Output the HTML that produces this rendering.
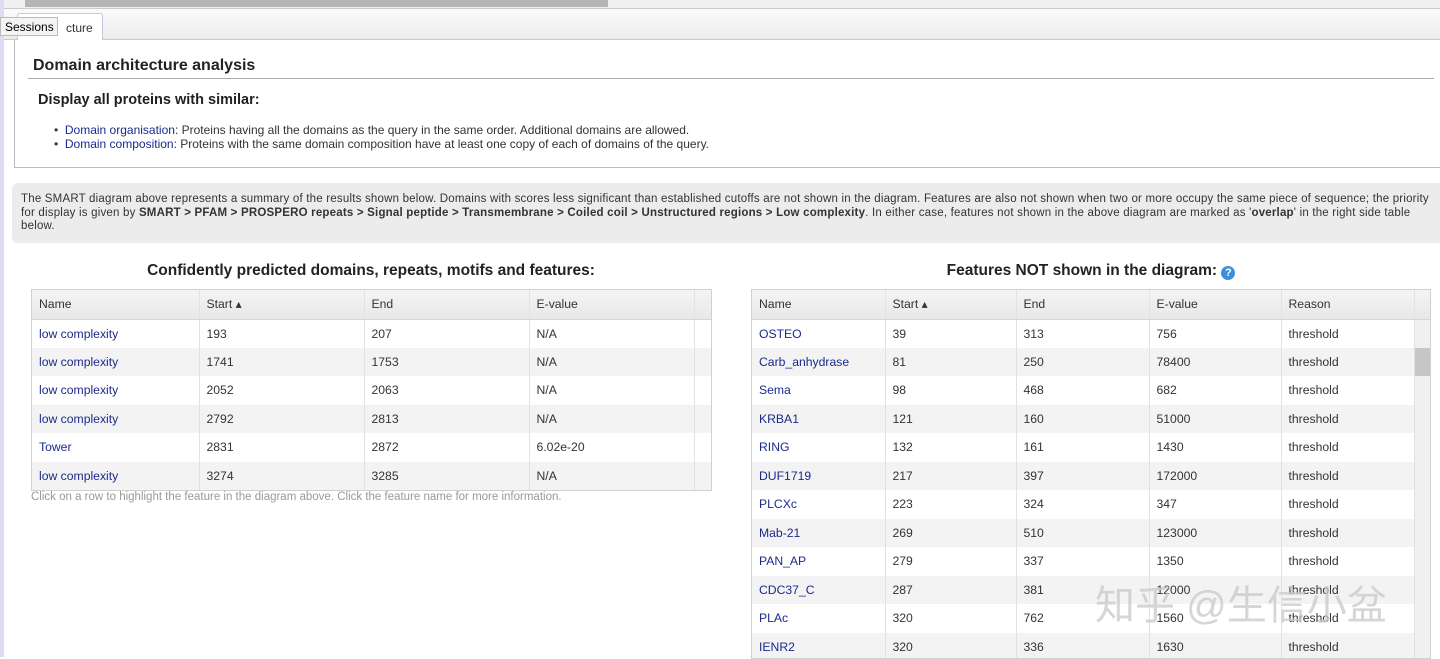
<!DOCTYPE html>
<html><head><meta charset="utf-8"><style>
*{margin:0;padding:0;box-sizing:border-box}
body{width:1440px;height:657px;overflow:hidden;background:#fff;font-family:"Liberation Sans",Arial,sans-serif;position:relative;color:#333}
.a{position:absolute}
a,.lk{color:#1a2a8c;text-decoration:none}
table{border-collapse:collapse;table-layout:fixed;font-size:12.2px;color:#333}
td,th{height:28.5px;padding:0 7px;text-align:left;font-weight:normal;border-right:1px solid #e2e2e2;white-space:nowrap;overflow:hidden}
th{background:linear-gradient(#f4f4f4,#e8e8e8);height:29px;border-bottom:1px solid #d6d6d6}
tr.g td{background:#f3f3f3}
.tb{border:1px solid #d0d0d0;overflow:hidden;background:#fff}
</style></head><body>
<div class="a" style="left:0;top:0;width:4px;height:657px;background:#dcdcf5"></div>
<div class="a" style="left:4px;top:0;width:1436px;height:9px;background:#f0f0f0;border-bottom:1px solid #ccc"></div>
<div class="a" style="left:25px;top:0;width:583px;height:7px;background:#b4b4b4"></div>
<div class="a" style="left:4px;top:9px;width:1436px;height:31px;background:linear-gradient(#fbfbfb,#ececec);border-bottom:1px solid #c8c8d8"></div>
<div class="a" style="left:17px;top:13px;width:86px;height:28px;background:#fff;border:1px solid #c8c8d8;border-bottom:none;border-radius:3px 3px 0 0;font-size:12px;padding:7px 0 0 48px">cture</div>
<div class="a" style="left:0;top:17px;width:58px;height:19px;background:#f4f4f4;border:1px solid #bbb;font-size:12px;padding:2px 0 0 4px;color:#000">Sessions</div>
<div class="a" style="left:14px;top:40px;width:1430px;height:128px;border:1px solid #bbb;border-top:none;background:#fff"></div>
<div class="a" style="left:33px;top:57px;font-size:16px;font-weight:bold;color:#222">Domain architecture analysis</div>
<div class="a" style="left:28px;top:78px;width:1406px;height:1px;background:#aaa"></div>
<div class="a" style="left:38px;top:92px;font-size:14.5px;font-weight:bold;color:#222">Display all proteins with similar:</div>
<div class="a" style="left:54px;top:123px;font-size:12px;line-height:14px;color:#333">
<div>•&nbsp;&nbsp;<span class="lk">Domain organisation</span>: Proteins having all the domains as the query in the same order. Additional domains are allowed.</div>
<div>•&nbsp;&nbsp;<span class="lk">Domain composition</span>: Proteins with the same domain composition have at least one copy of each of domains of the query.</div></div>
<div class="a" style="left:12px;top:183px;width:1440px;height:60px;background:#ececec;border-radius:6px"></div>
<div class="a" style="left:21px;top:193px;width:1408px;font-size:11.5px;line-height:13.5px;letter-spacing:0.2px;color:#333">The SMART diagram above represents a summary of the results shown below. Domains with scores less significant than established cutoffs are not shown in the diagram. Features are also not shown when two or more occupy the same piece of sequence; the priority for display is given by <b>SMART &gt; PFAM &gt; PROSPERO repeats &gt; Signal peptide &gt; Transmembrane &gt; Coiled coil &gt; Unstructured regions &gt; Low complexity</b>. In either case, features not shown in the above diagram are marked as '<b>overlap</b>' in the right side table below.</div>
<div class="a" style="left:31px;top:262px;width:680px;text-align:center;font-size:15.5px;font-weight:bold;color:#222">Confidently predicted domains, repeats, motifs and features:</div>
<div class="a" style="left:751px;top:262px;width:680px;text-align:center;font-size:15.5px;font-weight:bold;color:#222">Features NOT shown in the diagram: <span style="display:inline-block;width:14px;height:14px;border-radius:7px;background:#3d8fd8;color:#fff;font-size:11px;line-height:14px;vertical-align:-1px">?</span></div>
<div class="a tb" style="left:31px;top:289px;width:681px;height:202px">
<table style="width:680px"><colgroup><col style="width:167px"><col style="width:165px"><col style="width:165px"><col style="width:165px"><col style="width:18px"></colgroup>
<tr><th>Name</th><th>Start ▴</th><th>End</th><th>E-value</th><th></th></tr>
<tr><td class="lk">low complexity</td><td>193</td><td>207</td><td>N/A</td><td></td></tr>
<tr class="g"><td class="lk">low complexity</td><td>1741</td><td>1753</td><td>N/A</td><td></td></tr>
<tr><td class="lk">low complexity</td><td>2052</td><td>2063</td><td>N/A</td><td></td></tr>
<tr class="g"><td class="lk">low complexity</td><td>2792</td><td>2813</td><td>N/A</td><td></td></tr>
<tr><td class="lk">Tower</td><td>2831</td><td>2872</td><td>6.02e-20</td><td></td></tr>
<tr class="g"><td class="lk">low complexity</td><td>3274</td><td>3285</td><td>N/A</td><td></td></tr>
</table></div>
<div class="a" style="left:31px;top:491px;font-size:11.5px;color:#999">Click on a row to highlight the feature in the diagram above. Click the feature name for more information.</div>
<div class="a tb" style="left:751px;top:289px;width:680px;height:370px">
<table style="width:680px"><colgroup><col style="width:133px"><col style="width:131px"><col style="width:133px"><col style="width:132px"><col style="width:133px"><col style="width:18px"></colgroup>
<tr><th>Name</th><th>Start ▴</th><th>End</th><th>E-value</th><th>Reason</th><th></th></tr>
<tr><td class="lk">OSTEO</td><td>39</td><td>313</td><td>756</td><td>threshold</td><td style="background:#f0f0f0"></td></tr>
<tr class="g"><td class="lk">Carb_anhydrase</td><td>81</td><td>250</td><td>78400</td><td>threshold</td><td style="background:#c6c6c6"></td></tr>
<tr><td class="lk">Sema</td><td>98</td><td>468</td><td>682</td><td>threshold</td><td style="background:#f0f0f0"></td></tr>
<tr class="g"><td class="lk">KRBA1</td><td>121</td><td>160</td><td>51000</td><td>threshold</td><td style="background:#f0f0f0"></td></tr>
<tr><td class="lk">RING</td><td>132</td><td>161</td><td>1430</td><td>threshold</td><td style="background:#f0f0f0"></td></tr>
<tr class="g"><td class="lk">DUF1719</td><td>217</td><td>397</td><td>172000</td><td>threshold</td><td style="background:#f0f0f0"></td></tr>
<tr><td class="lk">PLCXc</td><td>223</td><td>324</td><td>347</td><td>threshold</td><td style="background:#f0f0f0"></td></tr>
<tr class="g"><td class="lk">Mab-21</td><td>269</td><td>510</td><td>123000</td><td>threshold</td><td style="background:#f0f0f0"></td></tr>
<tr><td class="lk">PAN_AP</td><td>279</td><td>337</td><td>1350</td><td>threshold</td><td style="background:#f0f0f0"></td></tr>
<tr class="g"><td class="lk">CDC37_C</td><td>287</td><td>381</td><td>12000</td><td>threshold</td><td style="background:#f0f0f0"></td></tr>
<tr><td class="lk">PLAc</td><td>320</td><td>762</td><td>1560</td><td>threshold</td><td style="background:#f0f0f0"></td></tr>
<tr class="g"><td class="lk">IENR2</td><td>320</td><td>336</td><td>1630</td><td>threshold</td><td style="background:#f0f0f0"></td></tr>
</table></div>
<div class="a" style="left:1095px;top:573px;font-size:40px;color:rgba(200,200,200,0.75);font-family:'Liberation Sans','Noto Sans CJK SC',sans-serif;white-space:nowrap">知乎 @生信小盆</div>
</body></html>
